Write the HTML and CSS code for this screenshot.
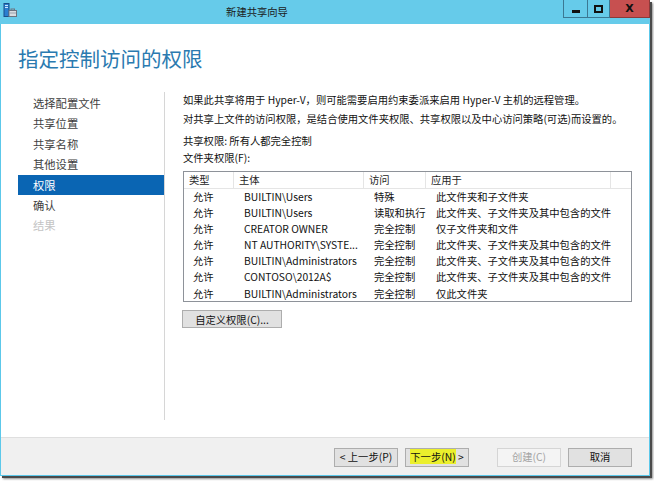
FILE: index.html
```html
<!DOCTYPE html>
<html lang="zh-CN">
<head>
<meta charset="utf-8">
<title>新建共享向导</title>
<link rel="stylesheet" href="styles.css">
</head>
<body>
<div class="window">
  <div class="titlebar">
    <svg class="app-icon" width="14" height="15" viewBox="0 0 14 15">
      <rect x="1" y="0.5" width="5" height="13" fill="#2b7fd0" stroke="#1a4f8a" stroke-width="1"/>
      <rect x="2" y="2" width="3" height="1" fill="#cfe6ff"/>
      <rect x="2" y="4" width="3" height="1" fill="#cfe6ff"/>
      <rect x="6" y="7.5" width="7.5" height="6" fill="#d9dde2" stroke="#6b7480" stroke-width="1"/>
      <rect x="8" y="6" width="3.5" height="1.5" fill="none" stroke="#6b7480" stroke-width="1"/>
      <rect x="6.5" y="9.5" width="6.5" height="1" fill="#9aa3ad"/>
    </svg>
    <div class="title">新建共享向导</div>
    <div class="winbtns">
      <div class="wb wb-min"><span class="min-glyph"></span></div>
      <div class="wb wb-max"><span class="max-glyph"></span></div>
      <div class="wb wb-close"><span class="close-glyph">X</span></div>
    </div>
  </div>

  <div class="main">
    <div class="header">
      <h1 class="page-title">指定控制访问的权限</h1>
    </div>
    <div class="body">
      <ul class="nav">
        <li class="nav-item">选择配置文件</li>
        <li class="nav-item">共享位置</li>
        <li class="nav-item">共享名称</li>
        <li class="nav-item">其他设置</li>
        <li class="nav-item active">权限</li>
        <li class="nav-item">确认</li>
        <li class="nav-item disabled">结果</li>
      </ul>
      <div class="content">
        <p class="line l1">如果此共享将用于 Hyper-V，则可能需要启用约束委派来启用 Hyper-V 主机的远程管理。</p>
        <p class="line l2">对共享上文件的访问权限，是结合使用文件夹权限、共享权限以及中心访问策略(可选)而设置的。</p>
        <p class="line l3">共享权限: 所有人都完全控制</p>
        <p class="line l4">文件夹权限(F):</p>
        <div class="list">
          <div class="list-head">
            <div class="hc">类型</div>
            <div class="hc">主体</div>
            <div class="hc">访问</div>
            <div class="hc">应用于</div>
            <div class="hc last"></div>
          </div>
          <div class="row"><div class="c">允许</div><div class="c">BUILTIN\Users</div><div class="c">特殊</div><div class="c">此文件夹和子文件夹</div></div>
          <div class="row"><div class="c">允许</div><div class="c">BUILTIN\Users</div><div class="c">读取和执行</div><div class="c">此文件夹、子文件夹及其中包含的文件</div></div>
          <div class="row"><div class="c">允许</div><div class="c">CREATOR OWNER</div><div class="c">完全控制</div><div class="c">仅子文件夹和文件</div></div>
          <div class="row"><div class="c">允许</div><div class="c">NT AUTHORITY\SYSTE...</div><div class="c">完全控制</div><div class="c">此文件夹、子文件夹及其中包含的文件</div></div>
          <div class="row"><div class="c">允许</div><div class="c">BUILTIN\Administrators</div><div class="c">完全控制</div><div class="c">此文件夹、子文件夹及其中包含的文件</div></div>
          <div class="row"><div class="c">允许</div><div class="c">CONTOSO\2012A$</div><div class="c">完全控制</div><div class="c">此文件夹、子文件夹及其中包含的文件</div></div>
          <div class="row"><div class="c">允许</div><div class="c">BUILTIN\Administrators</div><div class="c">完全控制</div><div class="c">仅此文件夹</div></div>
        </div>
        <button class="btn btn-custom">自定义权限(C)...</button>
      </div>
    </div>
  </div>

  <div class="footer">
    <button class="btn fbtn">&lt; 上一步(P)</button>
    <button class="btn fbtn next"><span class="hl">下一步(N)</span> &gt;</button>
    <button class="btn fbtn disabled-btn create">创建(C)</button>
    <button class="btn fbtn cancel">取消</button>
  </div>
</div>
</body>
</html>
```

FILE: styles.css
```css
* { box-sizing: border-box; }
html, body { margin: 0; padding: 0; background: #ffffff; }
body {
  width: 654px;
  height: 481px;
  overflow: hidden;
  font-family: "Noto Sans CJK SC", "Noto Sans", sans-serif;
  font-size: 10.3px;
  color: #111;
}
.window {
  width: 650px;
  height: 476px;
  border: 1px solid #5cc8ea;
  border-top: none;
  background: #f0f0f0;
  box-shadow: 2px 2px 0 #4a4a4a, 3px 3px 2px rgba(0,0,0,0.45);
  display: flex;
  flex-direction: column;
}
.titlebar {
  height: 24px;
  background: #66cbea;
  display: flex;
  align-items: flex-start;
  margin: 0 -1px;
}
.app-icon { margin: 3px 0 0 3px; flex: none; }
.title {
  flex: 1;
  text-align: center;
  padding-right: 66px;
  line-height: 24px;
  font-size: 10.3px;
  color: #1b1b1b;
}
.winbtns { display: flex; flex: none; }
.wb {
  height: 18px;
  border: 1px solid #3b7893;
  border-top: none;
  display: flex;
  align-items: center;
  justify-content: center;
}
.wb-min { width: 24px; border-right: none; }
.wb-max { width: 23px; }
.wb-close { width: 40px; background: #c75050; border-left: none; border-color: #8a3a3a; }
.min-glyph { width: 8px; height: 3px; background: #111; margin-top: 5px; }
.max-glyph { width: 9px; height: 8px; border: 2px solid #111; }
.close-glyph {
  font-family: "DejaVu Sans", sans-serif;
  font-weight: bold;
  font-size: 11px;
  color: #111;
  line-height: 12px;
}

.main {
  height: 413px;
  background: #ffffff;
  display: flex;
  flex-direction: column;
}
.header { height: 68px; padding-left: 17px; }
.page-title {
  margin: 20px 0 0 0;
  font-weight: normal;
  font-size: 20.5px;
  line-height: 28px;
  color: #2a7ab0;
}
.body {
  flex: 1;
  display: flex;
  padding-bottom: 17px;
}
.nav {
  list-style: none;
  margin: 0;
  padding: 1px 0 0 17px;
  width: 164px;
  border-right: 1px solid #d6d6d6;
}
.nav-item {
  height: 20.4px;
  line-height: 20.4px;
  padding-left: 15px;
  font-size: 11.3px;
  color: #3e3e3e;
}
.nav-item.active { background: #0a65b3; color: #ffffff; }
.nav-item.disabled { color: #c4c4c4; }

.content {
  flex: 1;
  padding: 0 17px 0 18px;
}
.line { margin: 0; line-height: 16px; white-space: nowrap; }
.l1 { margin-top: 0; }
.l2 { margin-top: 3px; }
.l3 { margin-top: 6px; }
.l4 { margin-top: 1px; }

.list {
  margin-top: 5px;
  border: 1px solid #8e9299;
  height: 131px;
  width: 449px;
}
.list-head, .row {
  display: grid;
  grid-template-columns: 50px 130px 62px 185px 1fr;
}
.list-head { height: 17px; border-bottom: 1px solid #e5e5e5; }
.hc {
  border-right: 1px solid #e5e5e5;
  line-height: 16px;
  padding-left: 5px;
  color: #1e1e1e;
}
.hc.last { border-right: none; }
.row { height: 16.1px; }
.row .c {
  line-height: 16px;
  padding-left: 10px;
  white-space: nowrap;
  color: #111;
}
.row .c:first-child { padding-left: 9px; }

.btn {
  font-family: "Noto Sans CJK SC", "Noto Sans", sans-serif;
  font-size: 10.3px;
  background: #e1e1e1;
  border: 1px solid #adadad;
  color: #111;
  padding: 0;
  margin: 0;
  border-radius: 0;
}
.btn-custom {
  display: block;
  margin: 8px 0 0 -1px;
  width: 100px;
  height: 18px;
  line-height: 15px;
}

.footer {
  height: 38px;
  border-top: 1px solid #dfdfdf;
  background: #f0f0f0;
  display: flex;
  align-items: center;
  justify-content: flex-end;
  padding: 1px 17px 0 0;
}
.fbtn { width: 64px; height: 19px; line-height: 16px; }
.fbtn.next { margin-left: 7px; width: 64px; }
.hl { background: #ebef2c; display: inline-block; line-height: 15px; }
.fbtn.create { margin-left: 28px; }
.disabled-btn { background: #f4f4f4; border-color: #d5d5d5; color: #a3a3a3; }
.fbtn.cancel { margin-left: 7px; }
```
